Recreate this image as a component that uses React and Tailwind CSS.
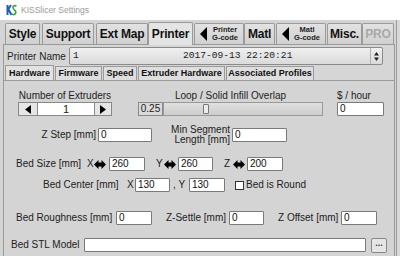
import React from 'react';

const font = { fontFamily: '"Liberation Sans", Arial, sans-serif' };
const mono = { fontFamily: '"Liberation Mono", "Courier New", monospace' };

function TopTab({ children, active, disabled, className = '' }) {
    return (
        <div
            className={
                'flex items-center justify-center shrink-0 border border-[#9a9a9a] border-b-0 rounded-t-[2px] font-bold leading-none text-[12px] tracking-[-0.2px] ' +
                (active
                    ? 'h-[23px] bg-[#e4e4e4] relative top-[1px] '
                    : 'h-[21px] bg-gradient-to-b from-[#e2e2e2] to-[#d0d0d0] ') +
                (disabled ? 'text-[#a9a9a9] ' : 'text-[#111] ') +
                className
            }
        >
            {children}
        </div>
    );
}

function GcodeTab({ top, className = '' }) {
    return (
        <TopTab className={'!justify-start pl-[5px] ' + className}>
            <svg width="7" height="14" viewBox="0 0 7 14" className="shrink-0">
                <polygon points="7,0 0,7 7,14" fill="#000" />
            </svg>
            <div className="flex-1 flex flex-col items-center text-[7.5px] leading-[8px] text-[#222] tracking-normal">
                <span>{top}</span>
                <span>G-code</span>
            </div>
        </TopTab>
    );
}

function SubTab({ children, active, className = '' }) {
    return (
        <div
            className={
                'flex items-center justify-center shrink-0 border border-[#9a9a9a] border-b-0 text-[9px] font-bold text-[#111] leading-none ' +
                (active ? 'h-[15px] bg-[#e2e2e2] ' : 'h-[14px] bg-[#dedede] ') +
                className
            }
        >
            {children}
        </div>
    );
}

function Field({ value, className = '' }) {
    return (
        <div className={'h-[14px] shrink-0 bg-white border border-[#7a7a7a] rounded-[1px] text-[10px] leading-[12px] pl-[2px] text-[#111] ' + className}>
            {value}
        </div>
    );
}

function BiArrow({ className = '' }) {
    return (
        <svg width="12" height="9" viewBox="0 0 12 9" className={'shrink-0 ' + className}>
            <polygon points="0,4.5 4.5,0 4.5,2.5 7.5,2.5 7.5,0 12,4.5 7.5,9 7.5,6.5 4.5,6.5 4.5,9" fill="#000" />
        </svg>
    );
}

export default function App() {
    return (
        <div className="w-[400px] h-[256px] overflow-hidden bg-[#d4d4d4] flex flex-col text-[#222] whitespace-nowrap" style={font}>
            {/* title bar */}
            <div className="h-[20px] bg-white flex items-center shrink-0">
                <svg width="11" height="12" viewBox="0 0 11 12" className="ml-[6px]">
                    <path d="M1.5 1v10M1.5 6.5l3.5-5.5M2.5 5.5l3 5.5" stroke="#1d5fb8" strokeWidth="2" fill="none" />
                    <path d="M10.5 2C8 0.8 6.3 2.6 7.3 4.5s3.2 2.3 2.3 4.6-3.2 1.6-3.8 0.6" stroke="#3aa040" strokeWidth="1.6" fill="none" />
                </svg>
                <span className="ml-[4px] text-[8.5px] text-[#9a9a9a]">KISSlicer Settings</span>
            </div>

            <div className="flex-1 flex min-h-0">
                <div className="flex flex-col w-[396px] shrink-0">
                    {/* top tabs */}
                    <div className="flex items-end h-[24px] pl-[5px] shrink-0">
                        <TopTab className="w-[35px]">Style</TopTab>
                        <TopTab className="w-[52px] ml-[2px]">Support</TopTab>
                        <TopTab className="w-[52px] ml-[2px]">Ext Map</TopTab>
                        <TopTab active className="w-[45px]">Printer</TopTab>
                        <GcodeTab top="Printer" className="w-[50px] ml-[1px]" />
                        <TopTab className="w-[31px]">Matl</TopTab>
                        <GcodeTab top="Matl" className="w-[50px] ml-[1px]" />
                        <TopTab className="w-[35px] ml-[1px]">Misc.</TopTab>
                        <TopTab disabled className="w-[32px]">PRO</TopTab>
                    </div>

                    {/* printer page */}
                    <div className="flex-1 flex flex-col ml-[3px] w-[392px] border border-[#9a9a9a] border-b-0 bg-[#d6d6d6] min-h-0">
                        <div className="flex items-center h-[18px] mt-[2px] shrink-0">
                            <span className="text-[10px] text-[#222] w-[65px] pl-[3px]">Printer Name</span>
                            <div className="flex items-center w-[314px] h-[18px] border border-[#8a8a8a] rounded-[2px] bg-gradient-to-b from-[#f0f0f0] to-[#dadada]">
                                <div className="flex-1 flex pl-[3px] text-[9.6px] text-[#222]" style={mono}>
                                    <span className="w-[110px]">1</span>
                                    <span>2017-09-13 22:20:21</span>
                                </div>
                                <div className="w-[12px] h-full border-l border-[#b0b0b0] flex items-center justify-center">
                                    <svg width="5" height="9" viewBox="0 0 5 9">
                                        <polygon points="2.5,0 5,3.5 0,3.5" fill="#222" />
                                        <polygon points="0,5.5 5,5.5 2.5,9" fill="#222" />
                                    </svg>
                                </div>
                            </div>
                        </div>

                        {/* sub tabs */}
                        <div className="flex items-end h-[15px] pl-[1px] shrink-0">
                            <SubTab active className="w-[49px]">Hardware</SubTab>
                            <SubTab className="w-[47px] ml-[1px]">Firmware</SubTab>
                            <SubTab className="w-[34px] ml-[1px]">Speed</SubTab>
                            <SubTab className="w-[87px] ml-[1px]">Extruder Hardware</SubTab>
                            <SubTab className="w-[88px] ml-[1px]">Associated Profiles</SubTab>
                        </div>

                        {/* hardware panel */}
                        <div className="flex-1 border-t border-[#9a9a9a] bg-[#d4d4d4] text-[10px] text-[#222] leading-none">
                            {/* row 1 */}
                            <div className="flex h-[25px] mt-[10px] pl-[14px]">
                                <div className="flex flex-col items-center w-[94px] shrink-0">
                                    <span className="h-[11px]">Number of Extruders</span>
                                    <div className="flex items-center h-[14px]">
                                        <div className="w-[20px] h-[14px] border border-[#888] bg-[#e6e6e6] flex items-center justify-center">
                                            <svg width="6" height="9" viewBox="0 0 6 9"><polygon points="6,0 0,4.5 6,9" fill="#000" /></svg>
                                        </div>
                                        <div className="w-[56px] h-[14px] border-y border-[#888] bg-white flex items-center justify-center text-[11px]">1</div>
                                        <div className="w-[18px] h-[14px] border border-[#888] bg-[#e6e6e6] flex items-center justify-center">
                                            <svg width="6" height="9" viewBox="0 0 6 9"><polygon points="0,0 6,4.5 0,9" fill="#000" /></svg>
                                        </div>
                                    </div>
                                </div>
                                <div className="flex flex-col items-center w-[185px] ml-[26px] shrink-0">
                                    <span className="h-[11px]">Loop / Solid Infill Overlap</span>
                                    <div className="flex items-center h-[14px] w-full">
                                        <div className="w-[25px] h-[14px] border border-[#888] bg-[#dadada] flex items-center justify-center">0.25</div>
                                        <div className="relative flex-1 h-[14px] border border-[#999] bg-gradient-to-b from-[#e0e0e0] to-[#cdcdcd]">
                                            <div className="absolute left-[39px] top-[1px] w-[6px] h-[10px] border border-[#777] bg-[#ececec] rounded-[1px]" />
                                        </div>
                                    </div>
                                </div>
                                <div className="flex flex-col ml-[14px]">
                                    <span className="h-[12px]">$ / hour</span>
                                    <Field value="0" className="w-[47px] h-[13px]" />
                                </div>
                            </div>

                            {/* row 2 */}
                            <div className="flex items-center h-[14px] mt-[12px]">
                                <span className="w-[94px] text-right pr-[2px] shrink-0">Z Step [mm]</span>
                                <Field value="0" className="w-[54px]" />
                                <span className="w-[80px] text-right pr-[2px] leading-[10px] shrink-0">Min Segment<br />Length [mm]</span>
                                <Field value="0" className="w-[55px]" />
                            </div>

                            {/* row 3 */}
                            <div className="flex items-center h-[14px] mt-[15px] pl-[12px]">
                                <span className="w-[71px] shrink-0">Bed Size [mm]</span>
                                <span className="w-[7px] shrink-0">X</span>
                                <BiArrow />
                                <Field value="260" className="w-[36px] ml-[3px]" />
                                <span className="w-[8px] ml-[11px] shrink-0">Y</span>
                                <BiArrow />
                                <Field value="260" className="w-[35px] ml-[2px]" />
                                <span className="w-[9px] ml-[11px] shrink-0">Z</span>
                                <BiArrow />
                                <Field value="200" className="w-[36px] ml-[2px]" />
                            </div>

                            {/* row 4 */}
                            <div className="flex items-center h-[14px] mt-[7px] pl-[39px]">
                                <span className="w-[84px] shrink-0">Bed Center [mm]</span>
                                <span className="w-[8px] shrink-0">X</span>
                                <Field value="130" className="w-[35px]" />
                                <span className="w-[19px] pl-[3px] shrink-0">, Y</span>
                                <Field value="130" className="w-[36px]" />
                                <div className="ml-[10px] w-[9px] h-[9px] border border-[#333] bg-white shrink-0" />
                                <span className="ml-[2px]">Bed is Round</span>
                            </div>

                            {/* row 5 */}
                            <div className="flex items-center h-[14px] mt-[19px] pl-[12px]">
                                <span className="w-[100px] shrink-0">Bed Roughness [mm]</span>
                                <Field value="0" className="w-[36px]" />
                                <span className="w-[63px] ml-[14px] shrink-0">Z-Settle [mm]</span>
                                <Field value="0" className="w-[35px]" />
                                <span className="w-[63px] ml-[14px] shrink-0">Z Offset [mm]</span>
                                <Field value="0" className="w-[36px]" />
                            </div>

                            {/* row 6 */}
                            <div className="flex items-center h-[14px] mt-[13px] pl-[7px]">
                                <span className="w-[73px] shrink-0">Bed STL Model</span>
                                <Field value="" className="w-[282px] h-[13px]" />
                                <div className="ml-[5px] w-[16px] h-[15px] shrink-0 border border-[#888] rounded-[2px] bg-[#e6e6e6] flex items-center justify-center text-[9px] font-bold text-[#335] leading-none pb-[3px]">...</div>
                            </div>
                        </div>
                    </div>
                </div>
                {/* window edge on the right */}
                <div className="w-[1px] bg-[#9c9c9c] shrink-0" />
                <div className="flex-1 bg-[#d8d8d8]" />
            </div>
        </div>
    );
}
